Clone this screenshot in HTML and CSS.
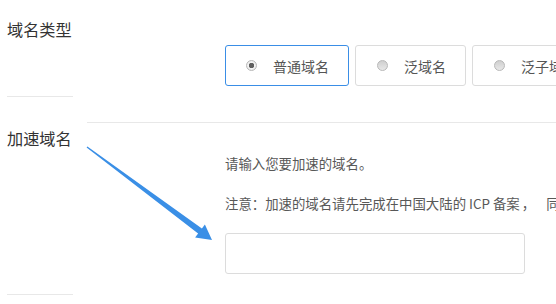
FILE: index.html
```html
<!DOCTYPE html>
<html>
<head>
    <meta charset="utf-8">
    <title>添加域名</title>
    <link rel="stylesheet" href="styles.css">
</head>

<body>

    <div class="row" id="row_type">
        <div class="label">域名类型</div>
        <div class="content">
            <div class="radio_group">
                <div class="radio_box checked"><span class="radio"></span>普通域名</div>
                <div class="radio_box"><span class="radio"></span>泛域名</div>
                <div class="radio_box"><span class="radio"></span>泛子域名</div>
            </div>
        </div>
    </div>

    <div class="row" id="row_domain">
        <div class="label">加速域名</div>
        <div class="content">
            <p class="help">请输入您要加速的域名。</p>
            <p class="help">注意：加速的域名请先完成在中国大陆的 ICP 备案<span class="punct">，</span>同时域名需要解析正常。</p>
            <input class="text_input" type="text">
        </div>
    </div>

    <!-- arrow drawn over the form -->
    <svg class="arrow" width="556" height="304" viewBox="0 0 556 304">
        <polygon fill="#3a8fe6" points="87.4,146.5 201.9,228.4 204.9,224.4 212,240 195.1,237.6 198.1,233.6 86.6,147.5"/>
    </svg>

</body>

</html>
```

FILE: styles.css
```css
html, body {
    margin: 0;
    padding: 0;
    background: #fff;
    font-family: "Noto Sans CJK SC", "Liberation Sans", sans-serif;
    overflow: hidden;
}
.row {
    display: flex;
}
.label {
    width: 66px;
    margin-left: 7px;
    box-sizing: border-box;
    border-bottom: 1px solid #e8e8e8;
    font-size: 16.2px;
    line-height: 20px;
    color: #333;
    white-space: nowrap;
}
.content {
    flex: 1;
    margin-left: 14px;
    padding-left: 138px;
    box-sizing: border-box;
    overflow: hidden;
}
#row_type .label {
    height: 97px;
    padding-top: 19px;
}
#row_type .content {
    height: 123px;
    padding-top: 45px;
    border-bottom: 1px solid #e8e8e8;
}
#row_domain .label {
    height: 172px;
    padding-top: 5px;
}
#row_domain .content {
    padding-top: 30px;
}
.radio_group {
    display: flex;
    gap: 6px;
    white-space: nowrap;
}
.radio_box {
    flex: none;
    display: flex;
    align-items: center;
    height: 41px;
    padding: 0 19px 0 21px;
    box-sizing: border-box;
    border: 1px solid #dcdcdc;
    border-radius: 3px;
    font-size: 14px;
    color: #555;
}
.radio_box.checked {
    padding-left: 20px;
    border-color: #3a8ee6;
}
.radio {
    display: inline-block;
    width: 11px;
    height: 11px;
    margin-right: 16px;
    box-sizing: border-box;
    border: 1px solid #b8b8b8;
    border-radius: 50%;
    background: linear-gradient(#cfcfcf, #e8e8e8);
}
.checked .radio {
    background: radial-gradient(circle, #606060 0, #606060 2.5px, #f4f4f4 3px, #e2e2e2 100%);
}
.help {
    margin: 0 0 20px 0;
    font-size: 13.4px;
    line-height: 20px;
    color: #585858;
    white-space: nowrap;
}
.punct {
    padding: 0 11px 0 2px;
}
.text_input {
    display: block;
    width: 300px;
    height: 41px;
    margin: 0;
    box-sizing: border-box;
    border: 1px solid #dcdcdc;
    border-radius: 3px;
    background: #fff;
}
.arrow {
    position: absolute;
    left: 0;
    top: 0;
    pointer-events: none;
}
```
